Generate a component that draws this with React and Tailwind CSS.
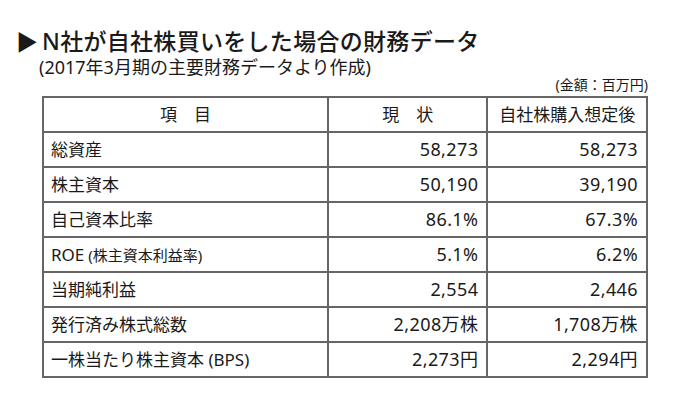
export default function App() {
  const rows = [
    { label: "総資産", a: "58,273", b: "58,273" },
    { label: "株主資本", a: "50,190", b: "39,190" },
    { label: "自己資本比率", a: "86.1%", b: "67.3%" },
    { label: "ROE", sub: " (株主資本利益率)", a: "5.1%", b: "6.2%" },
    { label: "当期純利益", a: "2,554", b: "2,446" },
    { label: "発行済み株式総数", a: "2,208万株", b: "1,708万株" },
    { label: "一株当たり株主資本 (BPS)", a: "2,273円", b: "2,294円" },
  ];
  const font = { fontFamily: '"Noto Sans", "Noto Sans CJK JP", sans-serif' };
  return (
    <div
      className="w-[680px] h-[415px] bg-white text-[#1a1a1a] overflow-hidden"
      style={font}
    >
      <div className="pt-[26px] pl-[16px] flex items-center h-[56px]">
        <span className="text-[22px] leading-none mr-[4px]">▶</span>
        <span className="text-[23px] leading-none font-medium tracking-[0.3px]">
          N社が自社株買いをした場合の財務データ
        </span>
      </div>
      <div className="pl-[39px] text-[18px] leading-[22px]">
        (2017年3月期の主要財務データより作成)
      </div>
      <div className="w-[648px] text-right text-[14px] leading-[18px] mt-[-2px]">
        (金額：百万円)
      </div>
      <table className="ml-[42px] mt-[2px] w-[606px] border-collapse text-[17px]">
        <colgroup>
          <col className="w-[286px]" />
          <col className="w-[160px]" />
          <col className="w-[160px]" />
        </colgroup>
        <thead>
          <tr className="h-[35px]">
            <th className="border-2 border-[#666] font-normal text-center p-0">
              項　目
            </th>
            <th className="border-2 border-[#666] font-normal text-center p-0">
              現　状
            </th>
            <th className="border-2 border-[#666] font-normal text-center p-0">
              自社株購入想定後
            </th>
          </tr>
        </thead>
        <tbody>
          {rows.map((r) => (
            <tr key={r.label} className="h-[35px]">
              <td className="border-2 border-[#666] pl-[7px] py-0">
                {r.label}
                {r.sub && <span className="text-[15px]">{r.sub}</span>}
              </td>
              <td className="border-2 border-[#666] text-right pr-[8px] py-0 text-[18px] tracking-[0.4px]">
                {r.a}
              </td>
              <td className="border-2 border-[#666] text-right pr-[8px] py-0 text-[18px] tracking-[0.4px]">
                {r.b}
              </td>
            </tr>
          ))}
        </tbody>
      </table>
    </div>
  );
}
